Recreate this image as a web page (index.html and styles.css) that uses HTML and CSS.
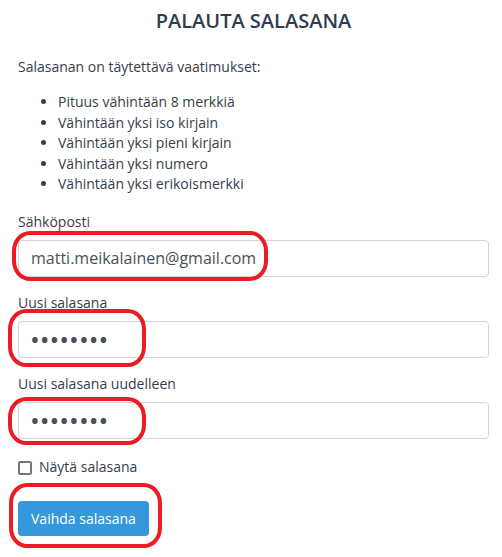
FILE: index.html
```html
<!DOCTYPE html>
<html lang="fi">
<head>
<meta charset="utf-8">
<title>Palauta salasana</title>
<link rel="stylesheet" href="styles.css">
</head>
<body>
<main class="page">
  <h1 class="title">PALAUTA SALASANA</h1>
  <p class="intro">Salasanan on täytettävä vaatimukset:</p>
  <ul class="rules">
    <li>Pituus vähintään 8 merkkiä</li>
    <li>Vähintään yksi iso kirjain</li>
    <li>Vähintään yksi pieni kirjain</li>
    <li>Vähintään yksi numero</li>
    <li>Vähintään yksi erikoismerkki</li>
  </ul>
  <form class="form">
    <div class="group">
      <label class="label" for="email">Sähköposti</label>
      <div class="field">
        <input class="input" id="email" type="text" value="matti.meikalainen@gmail.com">
        <span class="mark mark-email"></span>
      </div>
    </div>
    <div class="group">
      <label class="label" for="pw1">Uusi salasana</label>
      <div class="field">
        <input class="input input-pw" id="pw1" type="password" value="Salasan1">
        <span class="mark mark-pw1"></span>
      </div>
    </div>
    <div class="group group-last">
      <label class="label" for="pw2">Uusi salasana uudelleen</label>
      <div class="field">
        <input class="input input-pw" id="pw2" type="password" value="Salasan1">
        <span class="mark mark-pw2"></span>
      </div>
    </div>
    <label class="check"><span class="box"></span>Näytä salasana</label>
    <div class="field btn-field">
      <button class="btn" type="button">Vaihda salasana</button>
      <span class="mark mark-btn"></span>
    </div>
  </form>
</main>
</body>
</html>
```

FILE: styles.css
```css
* { box-sizing: border-box; }
html, body { margin: 0; padding: 0; background: #fff; }
body {
  font-family: "Open Sans", "DejaVu Sans", sans-serif;
  font-size: 14px;
  line-height: 20px;
  color: #34404c;
  min-height: 557px;
}
.page { padding: 8px 13px 24px 18px; }
.title {
  margin: 0;
  font-size: 20px;
  line-height: 25px;
  font-weight: 600;
  text-align: center;
  color: #2c3e50;
}
.intro { margin: 24px 0 0; }
.rules {
  margin: 15px 0 0;
  padding-left: 40px;
  line-height: 20.6px;
}
.form { margin-top: 17px; }
.group { margin-bottom: 16px; }
.group-last { margin-bottom: 18px; }
.label { display: block; margin-bottom: 8px; }
.field { position: relative; }
.input {
  display: block;
  width: 100%;
  height: 37px;
  padding: 0 12px;
  border: 1px solid #ced4da;
  border-radius: 4px;
  font-family: "Open Sans", "DejaVu Sans", sans-serif;
  font-size: 16px;
  color: #495057;
  background: #fff;
  outline: none;
}
.input-pw {
  font-size: 26px;
  padding-left: 11px;
}
.check {
  display: flex;
  align-items: center;
  gap: 7px;
  height: 20px;
}
.box {
  width: 14px;
  height: 14px;
  border: 2px solid #767676;
  border-radius: 2px;
  margin-top: 2px;
}
.btn-field { margin-top: 24px; display: inline-block; }
.btn {
  display: block;
  height: 35px;
  padding: 0 13px;
  border: none;
  border-radius: 4px;
  background: #3498db;
  color: #fff;
  font-family: "Open Sans", "DejaVu Sans", sans-serif;
  font-size: 14px;
}
.mark {
  position: absolute;
  border: 4px solid #ec1c24;
  border-radius: 18px / 20px;
  pointer-events: none;
}
.mark-email { left: -6px; top: -9px; width: 256px; height: 50px; }
.mark-pw1 { left: -10px; top: -12px; width: 138px; height: 58px; }
.mark-pw2 { left: -10px; top: -5px; width: 138px; height: 48px; }
.mark-btn { left: -9px; top: -18px; width: 153px; height: 65px; }
```
